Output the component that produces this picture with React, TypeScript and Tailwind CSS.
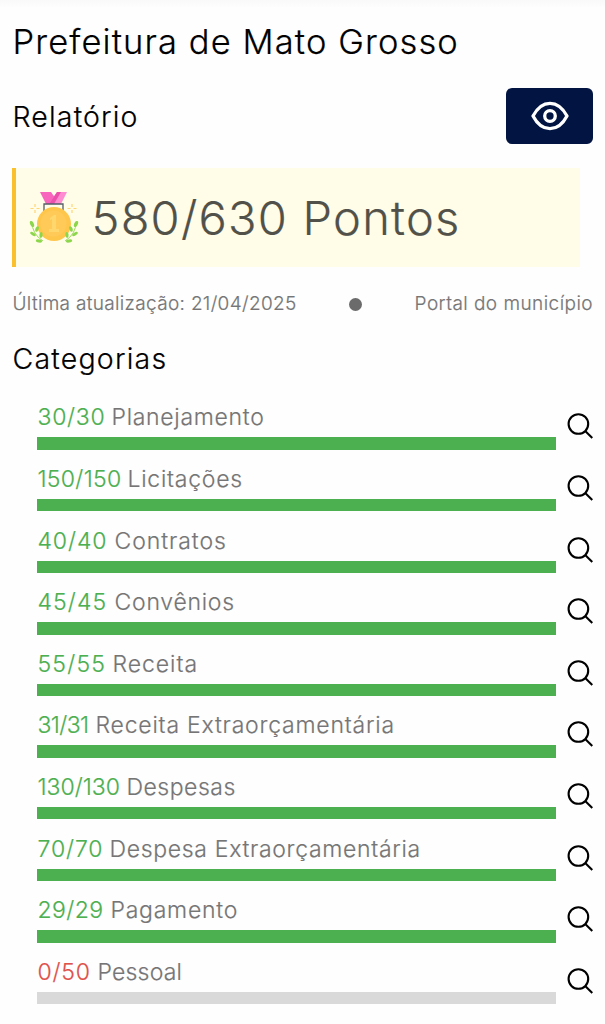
interface Category {
    name: string;
    points: number;
    total: number;
    scoreClass: string;
    nameClass: string;
}

const CATEGORIES: Category[] = [
    { name: "Planejamento", points: 30, total: 30, scoreClass: "w-[74px] tracking-[0.7px]", nameClass: "tracking-[0.7px]" },
    { name: "Licitações", points: 150, total: 150, scoreClass: "w-[90px] tracking-[0.3px]", nameClass: "tracking-[0.75px]" },
    { name: "Contratos", points: 40, total: 40, scoreClass: "w-[77px] tracking-[0.9px]", nameClass: "tracking-[0.95px]" },
    { name: "Convênios", points: 45, total: 45, scoreClass: "w-[77px] tracking-[1.1px]", nameClass: "tracking-[0.75px]" },
    { name: "Receita", points: 55, total: 55, scoreClass: "w-[75px] tracking-[1.2px]", nameClass: "tracking-[0.95px]" },
    { name: "Receita Extraorçamentária", points: 31, total: 31, scoreClass: "w-[58px] tracking-[-0.6px]", nameClass: "tracking-[0.79px]" },
    { name: "Despesas", points: 130, total: 130, scoreClass: "w-[89px] tracking-[0px]", nameClass: "tracking-[0.5px]" },
    { name: "Despesa Extraorçamentária", points: 70, total: 70, scoreClass: "w-[72px] tracking-[0.9px]", nameClass: "tracking-[0.68px]" },
    { name: "Pagamento", points: 29, total: 29, scoreClass: "w-[73px] tracking-[0.4px]", nameClass: "tracking-[0.75px]" },
    { name: "Pessoal", points: 0, total: 50, scoreClass: "w-[60px] tracking-[0.8px]", nameClass: "tracking-[0.2px]" },
];

function EyeIcon() {
    return (
        <svg width="38" height="30" viewBox="0 0 38 30" fill="none" stroke="white" strokeWidth="3.3" strokeLinejoin="round">
            <path d="M2 15C6.500 6.500 12 2.300 19 2.300S31.500 6.500 36 15C31.500 23.500 26 27.700 19 27.700S6.500 23.500 2 15Z" />
            <circle cx="19" cy="15" r="5.300" />
        </svg>
    );
}

function SearchIcon() {
    return (
        <svg width="26" height="26" viewBox="0 0 26 26" fill="none" stroke="black" strokeWidth="2.1">
            <circle cx="11.400" cy="11" r="9.800" />
            <path d="M18.200 17.900L25.300 25" />
        </svg>
    );
}

function MedalIcon() {
    return (
        <svg width="50" height="54" viewBox="0 0 50 54" fill="none">
            {/* Ribbon */}
            <path d="M11 1H22L29 11L24 13H17Z" fill="#f765bd" />
            <path d="M38 1H28L20 13H32Z" fill="#ff8bd0" />
            <path d="M28 1L20 13H25L32 1Z" fill="#ec50ad" />
            <path d="M15 20V13H34V20" stroke="#555c68" strokeWidth="1.300" />
            {/* Coin */}
            <circle cx="25" cy="33" r="17" fill="#ffc64c" />
            <path d="M37 21A17 17 0 0 1 14 46A17 17 0 0 0 37 21Z" fill="#ffb83f" />
            <circle cx="24.500" cy="32.500" r="13" fill="#ffca57" />
            <path d="M21 27L25 24H27V38H30V41H20V38H23V28L21 29Z" fill="#ffd76c" />
            {/* Laurel */}
            <path d="M3 31Q3 43 14 50M47 31Q47 43 36 50" stroke="#a0da64" strokeWidth="1" />
            <g fill="#8bd64b">
                <ellipse cx="3" cy="33" rx="1.800" ry="3.200" transform="rotate(-25 3 33)" />
                <ellipse cx="8" cy="38" rx="1.600" ry="3" transform="rotate(25 8 38)" />
                <ellipse cx="4" cy="43" rx="1.500" ry="3.200" transform="rotate(-60 4 43)" />
                <ellipse cx="12" cy="44" rx="1.600" ry="2.900" transform="rotate(5 12 44)" />
                <ellipse cx="10" cy="50" rx="1.500" ry="3.200" transform="rotate(-80 10 50)" />
                <ellipse cx="47" cy="33" rx="1.800" ry="3.200" transform="rotate(25 47 33)" />
                <ellipse cx="42" cy="38" rx="1.600" ry="3" transform="rotate(-25 42 38)" />
                <ellipse cx="46" cy="43" rx="1.500" ry="3.200" transform="rotate(60 46 43)" />
                <ellipse cx="38" cy="44" rx="1.600" ry="2.900" transform="rotate(-5 38 44)" />
                <ellipse cx="40" cy="50" rx="1.500" ry="3.200" transform="rotate(80 40 50)" />
            </g>
            {/* Sparkles */}
            <path d="M6 13V16M6 19V22M1.500 17.500H4.500M7.500 17.500H10.500M43 13V16M43 19V22M38.500 17.500H41.500M44.500 17.500H47.500" stroke="#ffd673" strokeWidth="1.200" />
        </svg>
    );
}

function CategoryRow({ category }: { category: Category }) {
    const { name, points, total, scoreClass, nameClass } = category;

    return (
        <li className="flex h-[61.6px] justify-between">
            <div className="w-[519px]">
                <div className="flex h-[36px] items-center whitespace-nowrap pl-[0.5px] text-[23px] leading-[36px]">
                    <span className={`shrink-0 ${scoreClass} ${points === 0 ? "text-[#df514b]" : "text-[#4caf50]"}`}>
                        {points}/{total}
                    </span>
                    <span className={`text-[#757575] ${nameClass}`}>{name}</span>
                </div>
                <div className="mt-[2px] h-[12.4px] bg-[#d9d9d9]">
                    <div className="h-full bg-[#4caf50]" style={{ width: `${(points / total) * 100}%` }} />
                </div>
            </div>
            <button className="mt-[14px] h-[26px]" aria-label={name}>
                <SearchIcon />
            </button>
        </li>
    );
}

export default function App() {
    return (
        <div className="h-[1024px] overflow-hidden bg-[#fefefe] px-3 font-['Inter',sans-serif] font-light text-black [-webkit-text-stroke:0.2px]">
            <div className="-mx-3 h-[8px] bg-gradient-to-b from-[#f9f9f9] to-[#fefefe]" />
            <h1 className="h-[68px] whitespace-nowrap pl-[0.5px] text-[34.5px] leading-[67px] tracking-[1.1px]">Prefeitura de Mato Grosso</h1>

            <div className="mt-[12px] flex h-[56px] items-center justify-between">
                <h2 className="pl-[0.5px] pt-[2px] text-[28.5px] tracking-[1.15px]">Relatório</h2>
                <button className="flex h-[56px] w-[87px] items-center justify-center rounded-[6px] bg-[#021442]" aria-label="Visualizar">
                    <EyeIcon />
                </button>
            </div>

            <div className="mt-[24px] flex h-[99px] w-[568px] items-center border-l-4 border-[#fbc02d] bg-[#fffde7] pl-[13px]">
                <MedalIcon />
                <span className="ml-[12.5px] whitespace-nowrap text-[47px] leading-[60px] tracking-[1.25px] text-[#51514a]">580/630 Pontos</span>
            </div>

            <div className="mt-[24px] flex h-[26px] items-center justify-between whitespace-nowrap text-[19px] text-[#757575]">
                <span className="pl-[0.5px] tracking-[0.33px]">Última atualização: 21/04/2025</span>
                <span className="h-[13px] w-[13px] rounded-full bg-[#6b6b6b]" />
                <span className="tracking-[0.45px]">Portal do município</span>
            </div>

            <h2 className="mt-[20px] h-[44px] pl-[0.5px] text-[28.5px] leading-[44px] tracking-[1.2px]">Categorias</h2>
            <ul className="mt-[18.4px] pl-[25px]">
                {CATEGORIES.map(category => (
                    <CategoryRow key={category.name} category={category} />
                ))}
            </ul>
        </div>
    );
}
